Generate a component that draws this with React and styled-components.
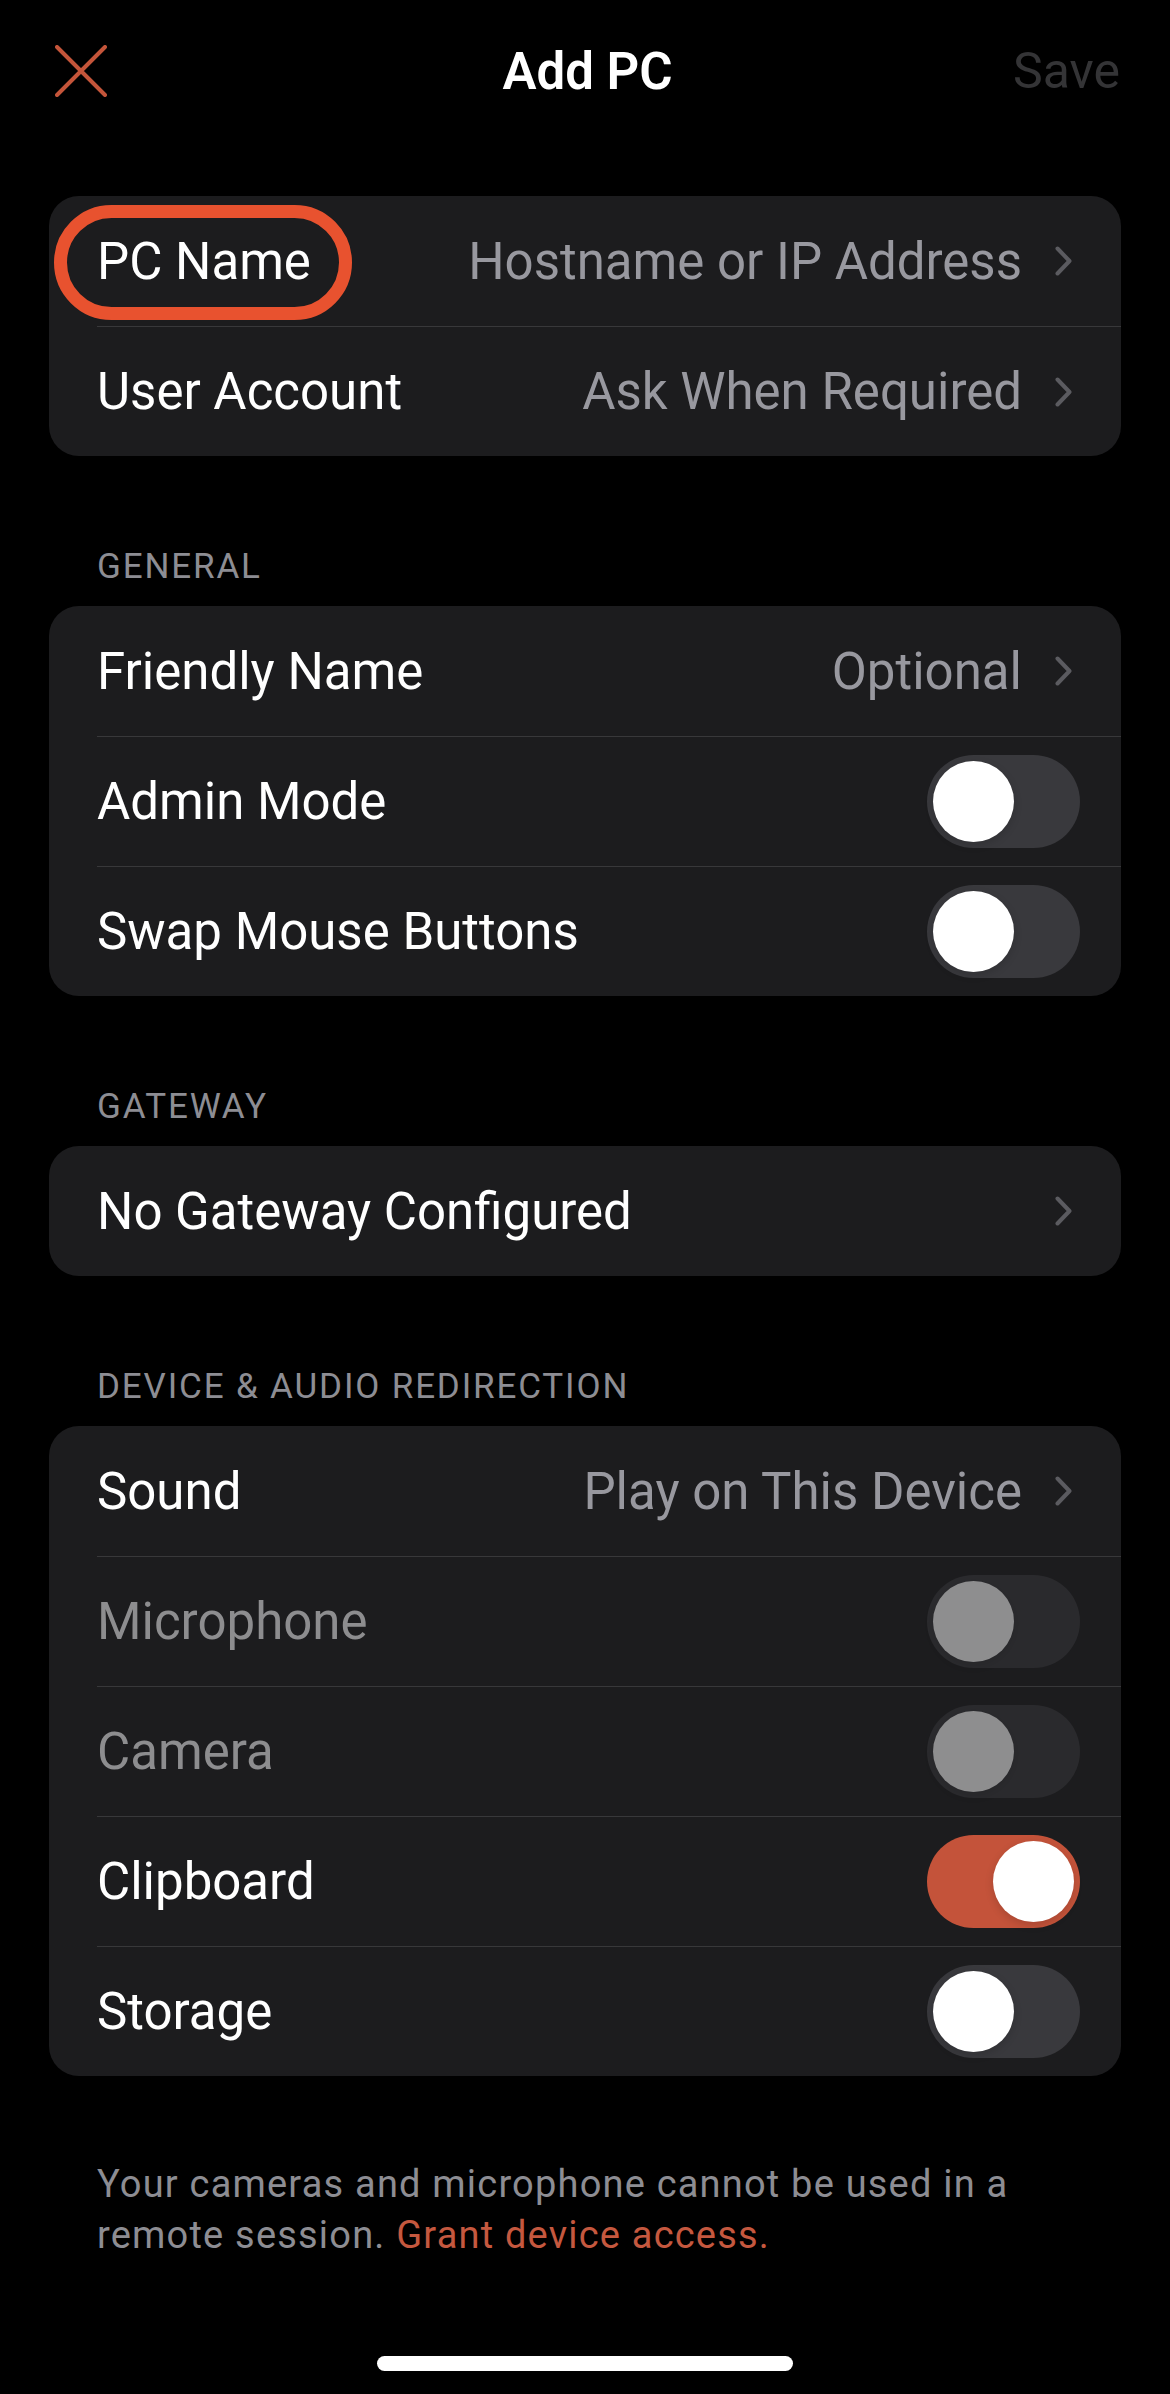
import React from 'react';
import styled, { createGlobalStyle } from 'styled-components';

const sections = [
	{
		title: null,
		rows: [
			{ label: 'PC Name', value: 'Hostname or IP Address', chevron: true, marked: true },
			{ label: 'User Account', value: 'Ask When Required', chevron: true },
		],
	},
	{
		title: 'General',
		rows: [
			{ label: 'Friendly Name', value: 'Optional', chevron: true },
			{ label: 'Admin Mode', toggle: 'off' },
			{ label: 'Swap Mouse Buttons', toggle: 'off' },
		],
	},
	{
		title: 'Gateway',
		rows: [{ label: 'No Gateway Configured', chevron: true }],
	},
	{
		title: 'Device & Audio Redirection',
		rows: [
			{ label: 'Sound', value: 'Play on This Device', chevron: true },
			{ label: 'Microphone', toggle: 'off', disabled: true },
			{ label: 'Camera', toggle: 'off', disabled: true },
			{ label: 'Clipboard', toggle: 'on' },
			{ label: 'Storage', toggle: 'off' },
		],
	},
];

function CloseIcon() {
	return (
		<svg width="52" height="52" viewBox="0 0 52 52">
			<path d="M2 2 L50 50 M50 2 L2 50" stroke="#c4553a" strokeWidth="4" strokeLinecap="round" fill="none" />
		</svg>
	);
}

function Chevron() {
	return (
		<ChevronWrap>
			<svg width="17" height="30" viewBox="0 0 17 30">
				<path d="M2.5 2.5 L14.5 15 L2.5 27.5" stroke="#5b5b60" strokeWidth="4" strokeLinecap="round" strokeLinejoin="round" fill="none" />
			</svg>
		</ChevronWrap>
	);
}

function Toggle({ on, disabled }) {
	return (
		<Track $on={on} $disabled={disabled}>
			<Knob />
		</Track>
	);
}

function SettingRow({ row, first }) {
	return (
		<Row>
			{row.marked && <Marker />}
			<RowBody $divider={!first}>
				<Label $dim={row.disabled}>{row.label}</Label>
				{row.value && <Value>{row.value}</Value>}
				{row.chevron && <Chevron />}
				{row.toggle && <Toggle on={row.toggle === 'on'} disabled={row.disabled} />}
			</RowBody>
		</Row>
	);
}

export default function App() {
	return (
		<Page>
			<GlobalStyle />
			<NavBar>
				<NavLeft>
					<CloseIcon />
				</NavLeft>
				<NavTitle>Add PC</NavTitle>
				<SaveButton>Save</SaveButton>
			</NavBar>

			<Content>
				{sections.map((section, i) => (
					<Section key={i}>
						{section.title && <SectionTitle>{section.title}</SectionTitle>}
						<Card>
							{section.rows.map((row, j) => (
								<SettingRow key={row.label} row={row} first={j === 0} />
							))}
						</Card>
					</Section>
				))}

				<Footnote>
					Your cameras and microphone cannot be used in a<br />
					remote session. <FootLink>Grant device access.</FootLink>
				</Footnote>
			</Content>

			<Spacer />
			<HomeIndicator />
		</Page>
	);
}

const GlobalStyle = createGlobalStyle`
	html, body {
		margin: 0;
		padding: 0;
		background: #000;
	}
	body {
		font-family: Roboto, "Liberation Sans", sans-serif;
		-webkit-font-smoothing: antialiased;
	}
`;

const Page = styled.div`
	display: flex;
	flex-direction: column;
	min-height: 100vh;
	background: #000;
	color: #fff;
`;

const NavBar = styled.div`
	display: grid;
	grid-template-columns: 1fr auto 1fr;
	align-items: center;
	height: 142px;
	padding: 0 50px 0 55px;
`;

const NavLeft = styled.div`
	display: flex;
	align-items: center;
`;

const NavTitle = styled.div`
	font-size: 51px;
	font-weight: 600;
	color: #fff;
`;

const SaveButton = styled.div`
	justify-self: end;
	font-size: 50px;
	color: #343436;
`;

const Content = styled.div`
	display: flex;
	flex-direction: column;
	padding: 54px 49px 0;
`;

const Section = styled.div`
	display: flex;
	flex-direction: column;
`;

const SectionTitle = styled.div`
	padding: 90px 48px 18px;
	font-size: 35px;
	line-height: 42px;
	letter-spacing: 1.85px;
	text-transform: uppercase;
	color: #8d8d93;
`;

const Card = styled.div`
	display: flex;
	flex-direction: column;
	background: #1c1c1e;
	border-radius: 30px;
`;

const Row = styled.div`
	position: relative;
	display: flex;
	height: 130px;
	padding-left: 48px;
`;

const RowBody = styled.div`
	flex: 1;
	display: flex;
	align-items: center;
	padding-right: 41px;
	border-top: ${(p) => (p.$divider ? '1px solid #38383a' : 'none')};
	box-sizing: border-box;
`;

const Label = styled.div`
	font-size: 51px;
	white-space: nowrap;
	color: ${(p) => (p.$dim ? '#8d8d8f' : '#fff')};
	margin-right: auto;
`;

const Value = styled.div`
	font-size: 51px;
	white-space: nowrap;
	color: #98989f;
`;

const ChevronWrap = styled.div`
	display: flex;
	align-items: center;
	margin: 0 8px 0 33px;
`;

const Marker = styled.div`
	position: absolute;
	left: 5px;
	top: 9px;
	width: 298px;
	height: 115px;
	border: 13px solid #e8522f;
	border-radius: 58px;
	box-sizing: border-box;
	pointer-events: none;
`;

const Track = styled.div`
	display: flex;
	justify-content: ${(p) => (p.$on ? 'flex-end' : 'flex-start')};
	align-items: center;
	width: 153px;
	height: 93px;
	padding: 6px;
	box-sizing: border-box;
	border-radius: 47px;
	background: ${(p) => (p.$on ? '#c4533a' : '#39393d')};
	opacity: ${(p) => (p.$disabled ? 0.5 : 1)};
`;

const Knob = styled.span`
	width: 81px;
	height: 81px;
	border-radius: 50%;
	background: #fff;
	box-shadow: 0 3px 8px rgba(0, 0, 0, 0.15);
`;

const Footnote = styled.p`
	margin: 0;
	padding: 83px 48px 0;
	font-size: 38px;
	line-height: 51px;
	letter-spacing: 1.2px;
	color: #8d8d93;
`;

const FootLink = styled.span`
	color: #c5583f;
`;

const Spacer = styled.div`
	flex: 1;
`;

const HomeIndicator = styled.div`
	width: 416px;
	height: 15px;
	border-radius: 8px;
	background: #fff;
	margin: 0 auto 23px;
`;
